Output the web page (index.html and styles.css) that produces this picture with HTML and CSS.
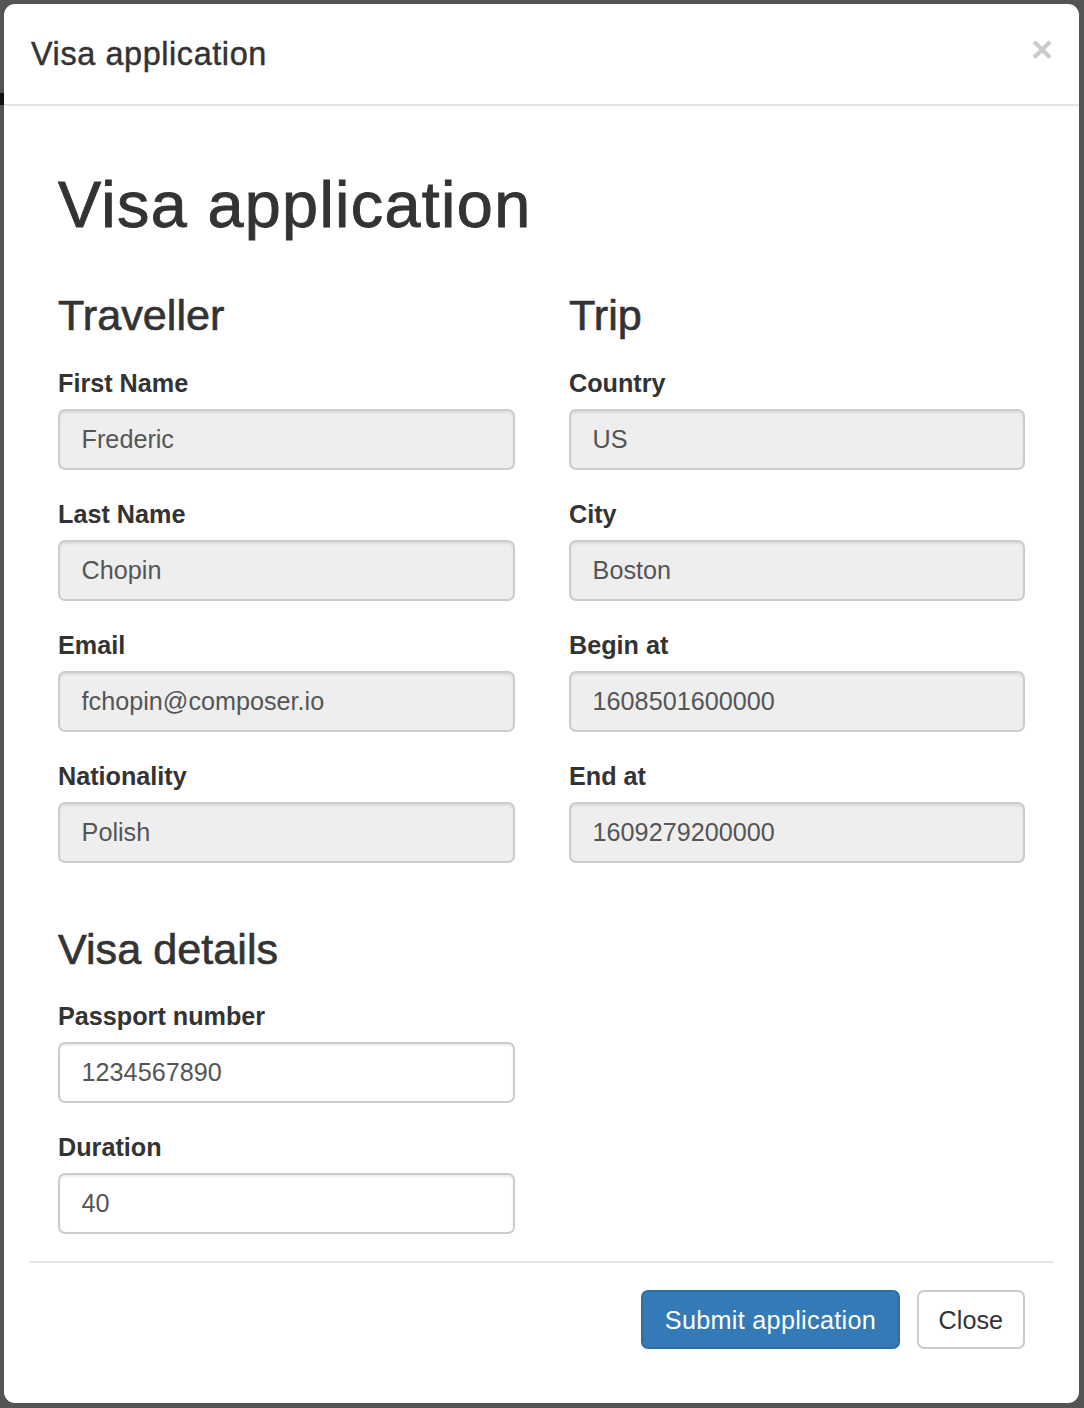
FILE: index.html
```html
<!DOCTYPE html>
<html lang="en">
<head>
<meta charset="utf-8">
<title>Visa application</title>
<link rel="stylesheet" href="styles.css">
</head>
<body>
<div class="modal">
  <div class="modal-header">
    <h4 class="modal-title">Visa application</h4>
    <span class="close">&times;</span>
  </div>
  <div class="modal-body">
    <h1 class="page-title">Visa application</h1>
    <div class="row">
      <div class="col">
        <h3 class="section-title first">Traveller</h3>
        <div class="form-group">
          <label class="label">First Name</label>
          <input class="input disabled" type="text" value="Frederic" readonly>
        </div>
        <div class="form-group">
          <label class="label">Last Name</label>
          <input class="input disabled" type="text" value="Chopin" readonly>
        </div>
        <div class="form-group">
          <label class="label">Email</label>
          <input class="input disabled" type="text" value="fchopin@composer.io" readonly>
        </div>
        <div class="form-group">
          <label class="label">Nationality</label>
          <input class="input disabled" type="text" value="Polish" readonly>
        </div>
      </div>
      <div class="col">
        <h3 class="section-title first">Trip</h3>
        <div class="form-group">
          <label class="label">Country</label>
          <input class="input disabled" type="text" value="US" readonly>
        </div>
        <div class="form-group">
          <label class="label">City</label>
          <input class="input disabled" type="text" value="Boston" readonly>
        </div>
        <div class="form-group">
          <label class="label">Begin at</label>
          <input class="input disabled" type="text" value="1608501600000" readonly>
        </div>
        <div class="form-group">
          <label class="label">End at</label>
          <input class="input disabled" type="text" value="1609279200000" readonly>
        </div>
      </div>
    </div>
    <div class="row">
      <div class="col">
        <h3 class="section-title">Visa details</h3>
        <div class="form-group">
          <label class="label">Passport number</label>
          <input class="input" type="text" value="1234567890">
        </div>
        <div class="form-group">
          <label class="label">Duration</label>
          <input class="input" type="text" value="40">
        </div>
      </div>
    </div>
  </div>
  <div class="modal-footer">
    <button class="btn btn-primary" type="button">Submit application</button>
    <button class="btn btn-default" type="button">Close</button>
  </div>
</div>
</body>
</html>
```
FILE: styles.css
```css
html, body {
  height: 100%;
}
body {
  margin: 0;
  box-sizing: border-box;
  padding: 4px 5px 5px 4px;
  background: #545454;
  font-family: "Liberation Sans", Arial, sans-serif;
  color: #333;
  position: relative;
}
body::before {
  content: "";
  position: absolute;
  left: 0;
  top: 93px;
  width: 4px;
  height: 12px;
  background: #111;
}
.modal {
  background: #fff;
  border-radius: 11px;
  height: 1399px;
  box-sizing: border-box;
  display: flex;
  flex-direction: column;
}
.modal-header {
  display: flex;
  justify-content: space-between;
  align-items: flex-start;
  padding: 27px;
  border-bottom: 2px solid #e5e5e5;
}
.modal-title {
  margin: 0;
  font-size: 32.4px;
  line-height: 46px;
  font-weight: normal;
  letter-spacing: 0.6px;
  -webkit-text-stroke: 0.45px #333;
}
.close {
  font-size: 37.8px;
  font-weight: bold;
  line-height: 1;
  color: #000;
  opacity: 0.2;
  margin-top: 0;
  margin-right: -1px;
}
.modal-body {
  flex: 1;
  padding: 27px 27px 0 54px;
}
.page-title {
  font-size: 64.8px;
  line-height: 1.1;
  font-weight: normal;
  margin: 36px 0 18px;
  letter-spacing: 1.3px;
  -webkit-text-stroke: 0.9px #333;
}
.row {
  display: grid;
  grid-template-columns: 457px 456px;
  column-gap: 54px;
}
.section-title {
  font-size: 43.2px;
  line-height: 1.1;
  font-weight: normal;
  margin: 36px 0 26px;
  -webkit-text-stroke: 0.65px #333;
}
.section-title.first {
  margin-top: 34px;
}
.form-group {
  margin-bottom: 27px;
}
.label {
  display: block;
  font-size: 25.2px;
  line-height: 34px;
  font-weight: bold;
  margin-bottom: 9px;
}
.input {
  display: block;
  width: 100%;
  box-sizing: border-box;
  height: 61px;
  padding: 10px 21.6px;
  font-family: inherit;
  font-size: 25.2px;
  color: #555;
  background: #fff;
  border: 2px solid #ccc;
  border-radius: 7px;
  box-shadow: inset 0 2px 2px rgba(0, 0, 0, 0.075);
  outline: none;
}
.input.disabled {
  background: #eee;
}
.modal-footer {
  margin: 0 26px;
  padding: 27px 28px 54px 0;
  border-top: 2px solid #e5e5e5;
  display: flex;
  justify-content: flex-end;
  gap: 17px;
}
.btn {
  font-family: inherit;
  font-size: 25.2px;
  line-height: 36px;
  height: 59px;
  padding: 10px 21.6px;
  border-radius: 7px;
  border: 2px solid transparent;
  cursor: pointer;
}
.btn-primary {
  background: #337ab7;
  border-color: #2e6da4;
  color: #fff;
  letter-spacing: 0.3px;
}
.btn-default {
  background: #fff;
  border-color: #ccc;
  color: #333;
  padding: 10px 20px;
}
```
